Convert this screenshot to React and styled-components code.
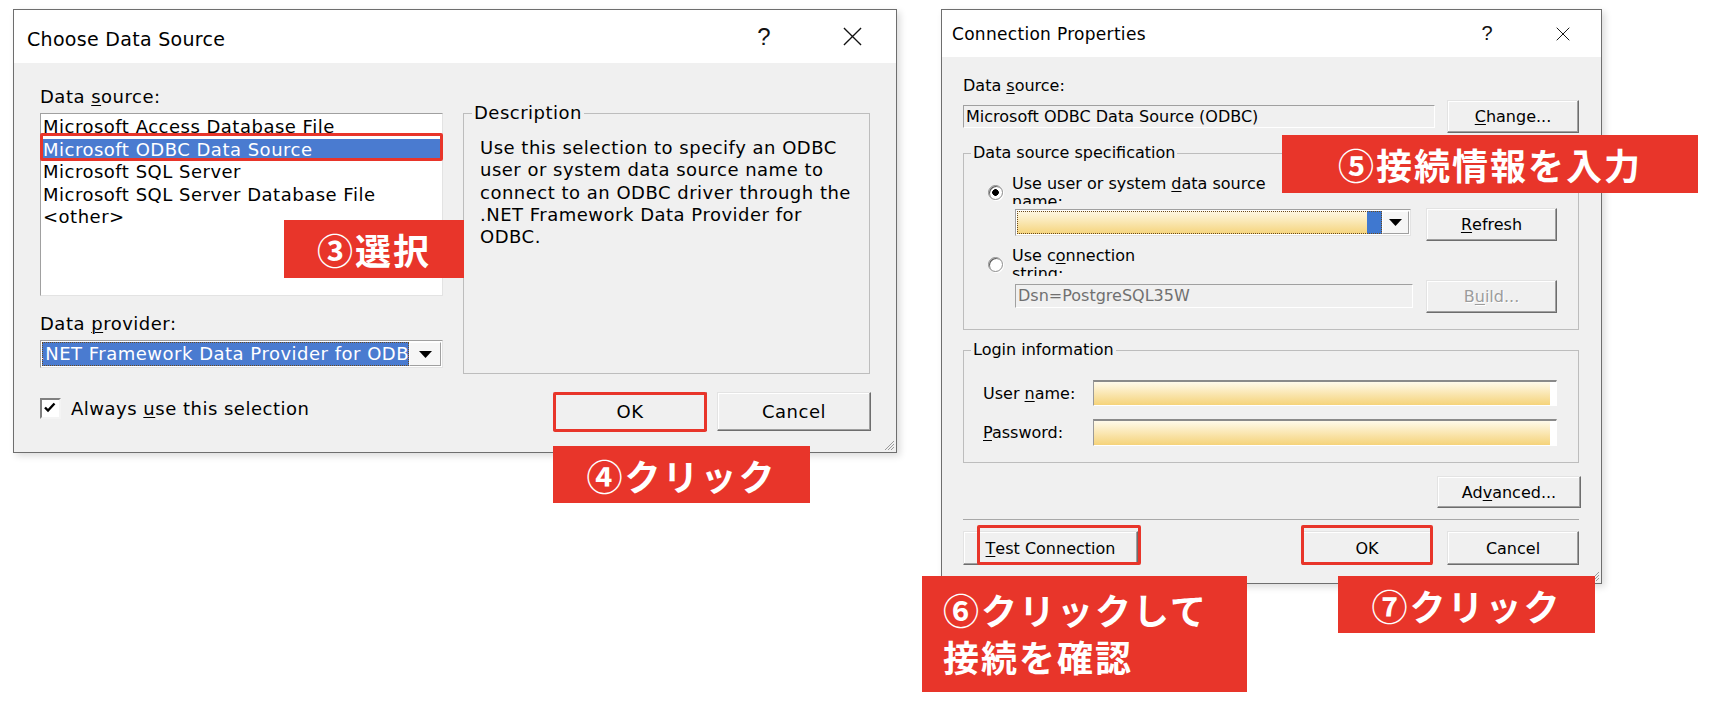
import styled, { createGlobalStyle, css } from 'styled-components'

const RED = '#e8352a'
const UI = '"DejaVu Sans", "Liberation Sans", sans-serif'

const GlobalStyle = createGlobalStyle`
  html, body { margin: 0; padding: 0; background: #fff; }
  body { font-family: ${UI}; }
  #root { width: 1724px; height: 712px; overflow: hidden; }
`

const markCss = css`
  position: relative;
  &::after {
    content: '';
    position: absolute;
    top: ${p => p.$mark[0]}px;
    right: ${p => p.$mark[1]}px;
    bottom: ${p => p.$mark[2]}px;
    left: ${p => p.$mark[3]}px;
    border: 3px solid ${RED};
    border-radius: 2px;
    pointer-events: none;
  }
`

const Page = styled.div`
  display: flex;
  align-items: flex-start;
  gap: 44px;
  padding: 9px 0 0 13px;
  box-sizing: border-box;
  width: 1724px;
  height: 712px;
`

const Window = styled.div`
  position: relative;
  box-sizing: border-box;
  width: ${p => p.$w}px;
  height: ${p => p.$h}px;
  border: 1px solid #6e6e6e;
  background: #f0f0f0;
  box-shadow: 3px 3px 7px rgba(0, 0, 0, 0.14);
  display: flex;
  flex-direction: column;
  font-family: ${UI};
  color: #000;
`

const TitleBar = styled.div`
  flex-shrink: 0;
  height: ${p => p.$h}px;
  background: #fff;
  display: flex;
  align-items: center;
  padding-left: ${p => p.$pad}px;
`

const Title = styled.div`
  flex: 1;
  font-size: ${p => p.$size}px;
  letter-spacing: 0.3px;
  padding-top: ${p => p.$nudge || 0}px;
`

const TitleBtn = styled.div`
  width: ${p => p.$w}px;
  height: 100%;
  display: flex;
  align-items: center;
  justify-content: center;
  font-family: "Liberation Sans", sans-serif;
  font-size: ${p => p.$size}px;
  color: #111;
`

const U = styled.span`
  text-decoration: underline;
  text-underline-offset: 2px;
  text-decoration-thickness: 1px;
`

const Label = styled.div`
  font-size: ${p => p.$size}px;
  line-height: ${p => p.$lh}px;
  letter-spacing: ${p => (p.$size > 17 ? 0.5 : 0)}px;
  margin-top: ${p => p.$mt || 0}px;
  white-space: nowrap;
`

const Button = styled.div`
  box-sizing: border-box;
  flex-shrink: 0;
  width: ${p => p.$w}px;
  height: ${p => p.$h}px;
  margin-top: ${p => p.$mt || 0}px;
  display: flex;
  align-items: center;
  justify-content: center;
  background: #f0f0f0;
  border: 1px solid;
  border-color: #e3e3e3 #6d6d6d #6d6d6d #e3e3e3;
  box-shadow: inset -1px -1px 0 #a0a0a0, inset 1px 1px 0 #fff;
  font-size: ${p => p.$size}px;
  letter-spacing: ${p => (p.$size > 17 ? 0.5 : 0)}px;
  color: ${p => (p.$disabled ? '#9c9c9c' : '#000')};
  text-shadow: ${p => (p.$disabled ? '1px 1px 0 #fff' : 'none')};
  white-space: nowrap;
  ${p => p.$mark && markCss}
`

const Callout = styled.div`
  position: absolute;
  z-index: 3;
  left: ${p => p.$x}px;
  top: ${p => p.$y}px;
  width: ${p => p.$w}px;
  height: ${p => p.$h}px;
  box-sizing: border-box;
  background: ${RED};
  color: #fff;
  font-family: "Noto Sans CJK JP", "Noto Sans", sans-serif;
  font-weight: 700;
  font-size: 36px;
  letter-spacing: 2px;
  display: flex;
  align-items: center;
  justify-content: center;
  white-space: nowrap;
`

const CalloutBlock = styled(Callout)`
  display: block;
  padding: 10px 0 0 21px;
  line-height: 47px;
`

const Grip = styled.svg`
  position: absolute;
  right: 1px;
  bottom: 1px;
`

/* ---------- left dialog ---------- */

const LeftBody = styled.div`
  display: grid;
  grid-template-columns: 403px 407px;
  column-gap: 20px;
  padding: 23px 26px 0 26px;
`

const Column = styled.div`
  display: flex;
  flex-direction: column;
  padding-top: ${p => p.$pt || 0}px;
`

const ListBox = styled.div`
  box-sizing: border-box;
  height: 183px;
  margin-top: 5px;
  padding: 2px 2px 0 1px;
  background: #fff;
  border: 1px solid;
  border-color: #a0a0a0 #e3e3e3 #e3e3e3 #a0a0a0;
`

const ListItem = styled.div`
  height: 22.5px;
  line-height: 22.5px;
  padding-left: 1px;
  font-size: 18px;
  letter-spacing: 0.5px;
  white-space: nowrap;
  ${p => p.$selected && css`
    background: #4a7bd0;
    color: #fff;
  `}
  ${p => p.$mark && markCss}
`

const Combo = styled.div`
  box-sizing: border-box;
  display: flex;
  flex-shrink: 0;
  width: ${p => (p.$w ? `${p.$w}px` : 'auto')};
  height: ${p => p.$h}px;
  margin-top: ${p => p.$mt || 0}px;
  padding: 1px;
  background: #fff;
  border: 1px solid;
  border-color: #a0a0a0 #e3e3e3 #e3e3e3 #a0a0a0;
`

const ComboValue = styled.div`
  flex: 1;
  min-width: 0;
  overflow: hidden;
  white-space: nowrap;
  outline: 1px dotted #6b4a1e;
  outline-offset: -1px;
  color: #fff;
  font-size: 18px;
  letter-spacing: 0.5px;
  line-height: ${p => p.$lh || 24}px;
  text-indent: -3px;
  background: ${p =>
    p.$yellow
      ? 'linear-gradient(#3f78d0, #3f78d0) right / 15px 100% no-repeat, linear-gradient(#fef8e4, #f5d47c)'
      : '#4a7bd0'};
`

const DropBtn = styled.div`
  box-sizing: border-box;
  width: ${p => p.$w}px;
  display: flex;
  align-items: center;
  justify-content: center;
  background: #f6f6f6;
  border: 1px solid;
  border-color: #fff #a0a0a0 #a0a0a0 #fff;
`

const CheckRow = styled.div`
  display: flex;
  align-items: center;
  gap: 10px;
  margin-top: 30px;
  font-size: 18px;
  letter-spacing: 0.5px;
`

const CheckBox = styled.span`
  box-sizing: border-box;
  width: 21px;
  height: 21px;
  background: #fff;
  border: 2px solid;
  border-color: #808080 #f4f4f4 #f4f4f4 #808080;
  display: flex;
  align-items: flex-start;
  justify-content: flex-start;
  padding: 2px 0 0 2px;
`

const GroupBox = styled.div`
  box-sizing: border-box;
  height: ${p => p.$h}px;
  margin-top: ${p => p.$mt || 0}px;
  border: 1px solid #bdbdbd;
  display: flex;
  flex-direction: column;
`

const GroupLabel = styled.div`
  align-self: flex-start;
  margin: ${p => p.$top}px 0 0 ${p => p.$left}px;
  padding: 0 2px;
  background: #f0f0f0;
  font-size: ${p => p.$size}px;
  line-height: ${p => p.$lh}px;
  letter-spacing: ${p => (p.$size > 17 ? 0.5 : 0)}px;
`

const Desc = styled.div`
  margin: 13px 0 0 16px;
  font-size: 18px;
  line-height: 22.3px;
  letter-spacing: 0.5px;
  white-space: nowrap;
`

const ButtonRow = styled.div`
  display: flex;
  justify-content: flex-end;
  gap: 10px;
  margin-top: 18px;
  margin-right: -1px;
`

/* ---------- right dialog ---------- */

const RightBody = styled.div`
  display: flex;
  flex-direction: column;
  padding: 19px 22px 0 21px;
`

const Row = styled.div`
  display: flex;
  align-items: ${p => p.$align || 'center'};
  gap: ${p => p.$gap || 0}px;
  margin-top: ${p => p.$mt || 0}px;
  padding-left: ${p => p.$pl || 0}px;
`

const Field = styled.div`
  box-sizing: border-box;
  flex-shrink: 0;
  width: ${p => p.$w}px;
  height: ${p => p.$h}px;
  margin-top: ${p => p.$mt || 0}px;
  padding-left: 2px;
  border: 1px solid;
  border-color: #a0a0a0 #fff #fff #a0a0a0;
  background: #f0f0f0;
  color: ${p => (p.$dim ? '#707070' : '#000')};
  font-size: 16px;
  line-height: ${p => p.$h - 2}px;
  white-space: nowrap;
  overflow: hidden;
`

const Input = styled.div`
  box-sizing: border-box;
  width: ${p => p.$w}px;
  height: ${p => p.$h}px;
  border: 1px solid;
  border-top-width: 2px;
  border-color: #8a8a8a #fff #fff #9a9a9a;
  background: linear-gradient(#fffaea, #f5d37a) left / calc(100% - 6px) 100% no-repeat, #fff;
`

const RadioRow = styled.div`
  display: flex;
  align-items: flex-start;
  gap: 9px;
  margin-top: ${p => p.$mt}px;
  padding-left: 24px;
`

const Radio = styled.span`
  box-sizing: border-box;
  width: 15px;
  height: 15px;
  margin-top: 10px;
  border-radius: 50%;
  border: 1px solid #8c8c8c;
  box-shadow: inset 1px 1px 0 #5f5f5f, 1px 1px 0 #fff;
  background: ${p =>
    p.$on ? 'radial-gradient(circle, #000 0 3px, #fff 3.6px)' : '#fff'};
`

const RadioText = styled.div`
  height: 29px;
  overflow: hidden;
  font-size: 16px;
  line-height: 18px;
  white-space: nowrap;
`

const FieldLabel = styled.div`
  width: 110px;
  font-size: 16px;
`

const Separator = styled.div`
  height: 1px;
  margin-top: 11px;
  background: #a8a8a8;
`

const Spacer = styled.div`
  flex: 1;
`

const Caret = () => (
  <svg width="13" height="7" viewBox="0 0 13 7">
    <path d="M0 0H13L6.5 7Z" fill="#000" />
  </svg>
)

const CloseGlyph = ({ size }) => (
  <svg width={size} height={size} viewBox="0 0 20 20">
    <path d="M1 1L19 19M19 1L1 19" stroke="#111" strokeWidth="1.4" fill="none" />
  </svg>
)

const GripLines = () => (
  <Grip width="12" height="12" viewBox="0 0 12 12">
    <path d="M11 2L2 11M11 5L5 11M11 8L8 11" stroke="#9a9a9a" strokeWidth="1" />
  </Grip>
)

function ChooseDataSource() {
  return (
    <Window $w={884} $h={444}>
      <TitleBar $h={53} $pad={13}>
        <Title $size={19} $nudge={4}>Choose Data Source</Title>
        <TitleBtn $w={88} $size={24}>?</TitleBtn>
        <TitleBtn $w={88}><CloseGlyph size={19} /></TitleBtn>
      </TitleBar>
      <LeftBody>
        <Column>
          <Label $size={18} $lh={22}>Data <U>s</U>ource:</Label>
          <ListBox>
            <ListItem>Microsoft Access Database File</ListItem>
            <ListItem $selected $mark={[-5.5, -3, 0, -2]}>Microsoft ODBC Data Source</ListItem>
            <ListItem>Microsoft SQL Server</ListItem>
            <ListItem>Microsoft SQL Server Database File</ListItem>
            <ListItem>&lt;other&gt;</ListItem>
          </ListBox>
          <Label $size={18} $lh={22} $mt={17}>Data <U>p</U>rovider:</Label>
          <Combo $h={28} $mt={5}>
            <ComboValue>.NET Framework Data Provider for ODBC</ComboValue>
            <DropBtn $w={32}><Caret /></DropBtn>
          </Combo>
          <CheckRow>
            <CheckBox>
              <svg width="12" height="11" viewBox="0 0 12 11">
                <path d="M1 5.5L4 8.5L10.5 1.5" stroke="#000" strokeWidth="2.4" fill="none" />
              </svg>
            </CheckBox>
            <span>Always <U>u</U>se this selection</span>
          </CheckRow>
        </Column>
        <Column $pt={27}>
          <GroupBox $h={261}>
            <GroupLabel $size={18} $lh={22} $top={-12} $left={8}>Description</GroupLabel>
            <Desc>
              Use this selection to specify an ODBC<br />
              user or system data source name to<br />
              connect to an ODBC driver through the<br />
              .NET Framework Data Provider for<br />
              ODBC.
            </Desc>
          </GroupBox>
          <ButtonRow>
            <Button $w={154} $h={39} $size={18} $mark={[-1, -1, -2, -1]}>OK</Button>
            <Button $w={154} $h={39} $size={18}>Cancel</Button>
          </ButtonRow>
        </Column>
      </LeftBody>
      <GripLines />
      <Callout $x={270} $y={210} $w={180} $h={58}>③選択</Callout>
      <Callout $x={539} $y={436} $w={257} $h={57}>④クリック</Callout>
    </Window>
  )
}

function ConnectionProperties() {
  return (
    <Window $w={661} $h={575}>
      <TitleBar $h={47} $pad={10}>
        <Title $size={17} $nudge={1}>Connection Properties</Title>
        <TitleBtn $w={76} $size={20}>?</TitleBtn>
        <TitleBtn $w={76}><CloseGlyph size={14} /></TitleBtn>
      </TitleBar>
      <RightBody>
        <Label $size={16} $lh={20}>Data <U>s</U>ource:</Label>
        <Row $mt={4} $gap={12}>
          <Field $w={472} $h={23}>Microsoft ODBC Data Source (ODBC)</Field>
          <Button $w={132} $h={33} $size={16}><U>C</U>hange...</Button>
        </Row>
        <GroupBox $h={177} $mt={20}>
          <GroupLabel $size={16} $lh={20} $top={-11} $left={7}>Data source specification</GroupLabel>
          <RadioRow $mt={12}>
            <Radio $on />
            <RadioText>Use user or system <U>d</U>ata source<br />name:</RadioText>
          </RadioRow>
          <Row $mt={4} $gap={15} $pl={51} $align="flex-start">
            <Combo $w={396} $h={27} $mt={1}>
              <ComboValue $yellow $lh={23} />
              <DropBtn $w={27}><Caret /></DropBtn>
            </Combo>
            <Button $w={131} $h={33} $size={16}><U>R</U>efresh</Button>
          </Row>
          <RadioRow $mt={6}>
            <Radio />
            <RadioText>Use c<U>o</U>nnection<br />string:</RadioText>
          </RadioRow>
          <Row $mt={4} $gap={13} $pl={51} $align="flex-start">
            <Field $w={398} $h={24} $mt={4} $dim>Dsn=PostgreSQL35W</Field>
            <Button $w={131} $h={33} $size={16} $disabled>B<U>u</U>ild...</Button>
          </Row>
        </GroupBox>
        <GroupBox $h={113} $mt={20}>
          <GroupLabel $size={16} $lh={20} $top={-11} $left={7}>Login information</GroupLabel>
          <Row $mt={20} $pl={19}>
            <FieldLabel>User <U>n</U>ame:</FieldLabel>
            <Input $w={464} $h={26} />
          </Row>
          <Row $mt={13} $pl={19}>
            <FieldLabel><U>P</U>assword:</FieldLabel>
            <Input $w={464} $h={27} />
          </Row>
        </GroupBox>
        <Row $mt={13}>
          <Spacer />
          <Button $w={144} $h={32} $size={16} style={{ marginRight: -2 }}>Ad<U>v</U>anced...</Button>
        </Row>
        <Separator />
        <Row $mt={11} $gap={15}>
          <Button $w={175} $h={34} $size={16} $mark={[-7, -4, -1, 13]}><U>T</U>est Connection</Button>
          <Spacer />
          <Button $w={130} $h={34} $size={16} $mark={[-7, -2, -1, -2]}>OK</Button>
          <Button $w={132} $h={34} $size={16}>Cancel</Button>
        </Row>
      </RightBody>
      <GripLines />
      <Callout $x={340} $y={125} $w={416} $h={58}>⑤接続情報を入力</Callout>
      <CalloutBlock $x={-20} $y={566} $w={325} $h={116}>
        ⑥クリックして<br />接続を確認
      </CalloutBlock>
      <Callout $x={396} $y={566} $w={257} $h={57}>⑦クリック</Callout>
    </Window>
  )
}

export default function App() {
  return (
    <>
      <GlobalStyle />
      <Page>
        <ChooseDataSource />
        <ConnectionProperties />
      </Page>
    </>
  )
}
